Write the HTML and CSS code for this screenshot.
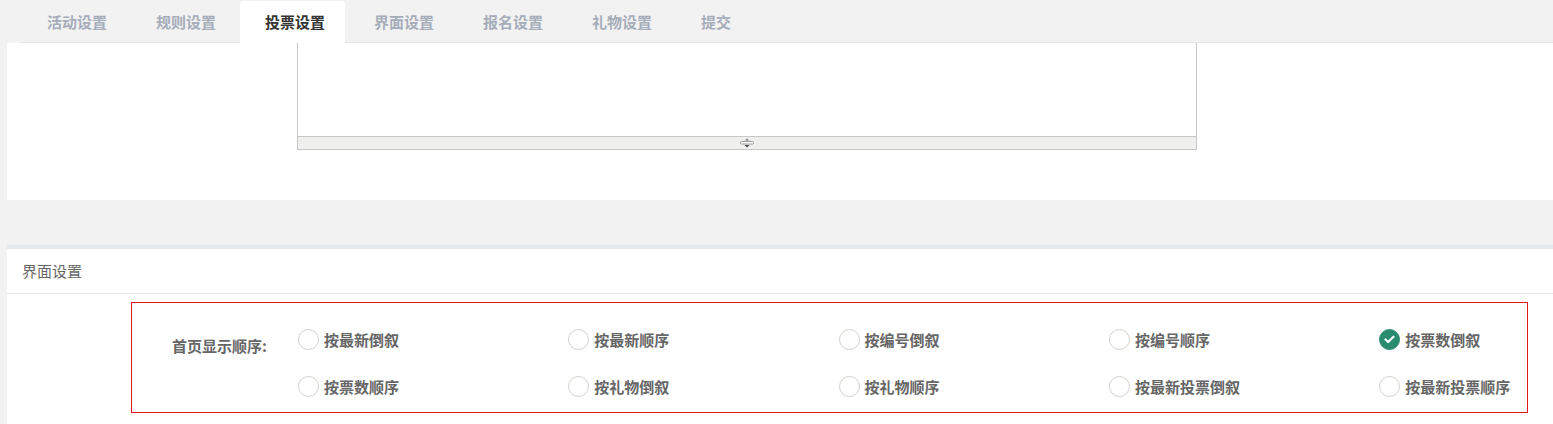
FILE: index.html
```html
<!DOCTYPE html>
<html>
<head>
    <meta charset="UTF-8" />
    <title>投票设置</title>
    <link rel="stylesheet" href="styles.css">
</head>
<body>
    <div class="tabs">
        <a class="tab">活动设置</a>
        <a class="tab">规则设置</a>
        <a class="tab active">投票设置</a>
        <a class="tab">界面设置</a>
        <a class="tab">报名设置</a>
        <a class="tab">礼物设置</a>
        <a class="tab">提交</a>
    </div>

    <div class="panel panel-top">
        <div class="editor">
            <div class="editor-body"></div>
            <div class="editor-status">
                <svg width="16" height="10" viewBox="0 0 16 10">
                    <path d="M6 2.5 L8 0.5 L10 2.5 Z" fill="#777"/>
                    <rect x="1.5" y="3.5" width="13" height="2.5" rx="1" fill="#fff" stroke="#999" stroke-width="1"/>
                    <path d="M5.5 7 L10.5 7 L8 9.5 Z" fill="#444"/>
                </svg>
            </div>
        </div>
    </div>

    <div class="panel panel-bottom">
        <div class="panel-head">界面设置</div>
        <div class="panel-body">
            <div class="order-box">
                <div class="order-label">首页显示顺序:</div>
                <div class="order-options">
                    <label class="opt"><span class="radio"></span>按最新倒叙</label>
                    <label class="opt"><span class="radio"></span>按最新顺序</label>
                    <label class="opt"><span class="radio"></span>按编号倒叙</label>
                    <label class="opt"><span class="radio"></span>按编号顺序</label>
                    <label class="opt"><span class="radio checked"><svg width="11" height="9" viewBox="0 0 11 9"><path d="M1.5 4.5 L4.2 7 L9.5 1.7" fill="none" stroke="#fff" stroke-width="2.2" stroke-linecap="round" stroke-linejoin="round"/></svg></span>按票数倒叙</label>
                    <label class="opt"><span class="radio"></span>按票数顺序</label>
                    <label class="opt"><span class="radio"></span>按礼物倒叙</label>
                    <label class="opt"><span class="radio"></span>按礼物顺序</label>
                    <label class="opt"><span class="radio"></span>按最新投票倒叙</label>
                    <label class="opt"><span class="radio"></span>按最新投票顺序</label>
                </div>
            </div>
        </div>
    </div>
</body>
</html>
```

FILE: styles.css
```css
* {
    box-sizing: border-box;
}
body {
    margin: 0;
    height: 424px;
    overflow: hidden;
    background-color: #f2f2f2;
    font-family: "Noto Sans CJK SC", "Liberation Sans", sans-serif;
    font-size: 15px;
    color: #666;
}
.tabs {
    display: flex;
    align-items: flex-end;
    height: 43px;
    margin-left: 20px;
    padding-left: 2px;
    border-bottom: 1px solid #e6e6e6;
}
.tab {
    display: block;
    height: 41px;
    line-height: 41px;
    padding: 0 20px 0 25px;
    margin-right: 4px;
    font-weight: bold;
    color: #a6adba;
}
.tab.active {
    height: 42px;
    margin-bottom: -1px;
    background-color: #fff;
    border-radius: 3px 3px 0 0;
    color: #333;
}
.panel {
    margin-left: 7px;
    background-color: #fff;
}
.panel-top {
    height: 157px;
    padding-left: 290px;
}
.editor {
    width: 900px;
    height: 107px;
    border: 1px solid #c8c8c8;
    border-top: none;
    display: flex;
    flex-direction: column;
}
.editor-body {
    flex: 1;
}
.editor-status {
    height: 13px;
    border-top: 1px solid #c8c8c8;
    background-color: #efefee;
    display: flex;
    justify-content: center;
    align-items: center;
}
.editor-status svg {
    display: block;
}
.panel-bottom {
    margin-top: 45px;
    border-top: 4px solid #e6e9ed;
    height: 179px;
}
.panel-head {
    height: 45px;
    line-height: 44px;
    padding-left: 15px;
    border-bottom: 1px solid #e6e6e6;
    color: #666;
}
.panel-body {
    padding-top: 8px;
}
.order-box {
    margin: 0 25px 0 124px;
    height: 111px;
    border: 1px solid #e8141c;
    padding: 21px 0 0 40px;
    display: flex;
}
.order-label {
    width: 126px;
    margin-top: 7px;
    line-height: 30px;
    font-weight: bold;
    color: #666;
}
.order-options {
    display: grid;
    grid-template-columns: repeat(4, 270.3px) auto;
    grid-auto-rows: 30px;
    row-gap: 17px;
    align-content: start;
}
.opt {
    display: flex;
    align-items: center;
    height: 30px;
    font-weight: bold;
    color: #666;
}
.radio {
    width: 21px;
    height: 21px;
    border-radius: 50%;
    border: 1px solid #d4d0ca;
    margin-right: 5px;
    display: flex;
    align-items: center;
    justify-content: center;
}
.radio.checked {
    background-color: #2a8c6f;
    border-color: #2a8c6f;
}
```
